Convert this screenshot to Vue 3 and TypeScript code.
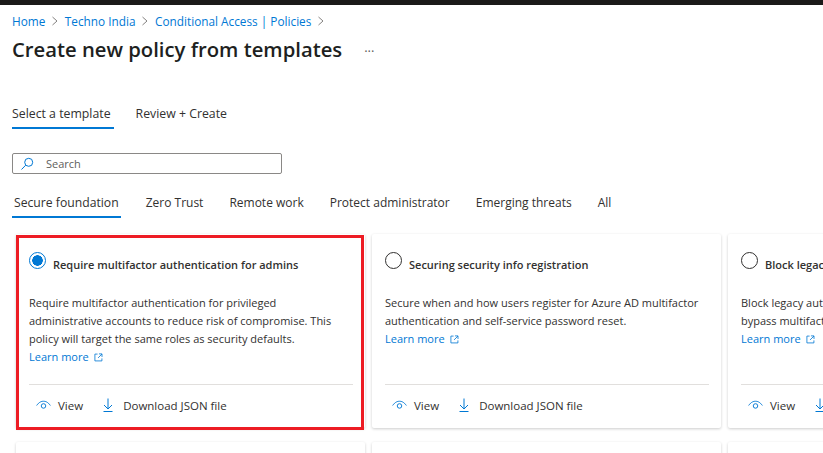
<script setup lang="ts">
interface Card { title: string; lines: string[] }
const crumbs = ['Home', 'Techno India', 'Conditional Access | Policies']
const pills = ['Secure foundation', 'Zero Trust', 'Remote work', 'Protect administrator', 'Emerging threats', 'All']
const cards: Card[] = [
  { title: 'Require multifactor authentication for admins', lines: ['Require multifactor authentication for privileged', 'administrative accounts to reduce risk of compromise. This', 'policy will target the same roles as security defaults.'] },
  { title: 'Securing security info registration', lines: ['Secure when and how users register for Azure AD multifactor', 'authentication and self-service password reset.'] },
  { title: 'Block legacy authentication', lines: ['Block legacy authentication endpoints that can be used to', 'bypass multifactor authentication.'] },
]
</script>

<template>
  <div class="page">
    <div class="topbar"></div>
    <nav class="crumbs">
      <template v-for="c in crumbs" :key="c">
        <a class="crumb">{{ c }}</a>
        <svg class="chev" viewBox="0 0 8 10" width="8" height="10"><path d="M1.500 1 L6 5 L1.500 9" fill="none" stroke="#767472" stroke-width="0.9" /></svg>
      </template>
    </nav>
    <div class="head">
      <h1>Create new policy from templates</h1>
      <span class="more">···</span>
    </div>
    <div class="steps">
      <span class="step active">Select a template</span>
      <span class="step">Review + Create</span>
    </div>
    <div class="search">
      <svg viewBox="0 0 14 14" width="14" height="14"><circle cx="8.700" cy="5.300" r="4" fill="none" stroke="#0078d4" stroke-width="1" /><path d="M5.700 8.200 L1.500 12.500" stroke="#0078d4" stroke-width="1" /></svg>
      <span>Search</span>
    </div>
    <div class="pills">
      <span v-for="(p, i) in pills" :key="p" class="pill" :class="{ on: i === 0 }">{{ p }}</span>
    </div>
    <div class="grid">
      <article v-for="(c, i) in cards" :key="c.title" class="card">
        <header class="card-head">
          <span class="radio" :class="{ checked: i === 0 }"></span>
          <h2>{{ c.title }}</h2>
        </header>
        <div class="desc">
          <div v-for="l in c.lines" :key="l">{{ l }}</div>
          <a class="learn">Learn more
            <svg viewBox="0 0 10 10" width="9" height="9"><path d="M4 1.200H1v7.600h7.800V6M5.500 1h3.400v3.400M8.800 1.200L4.500 5.500" fill="none" stroke="#0078d4" stroke-width="0.9" /></svg>
          </a>
        </div>
        <footer class="actions">
          <span class="action view">
            <svg viewBox="0 0 16 10" width="15" height="10"><path d="M0.700 5.500C3.500 1.600 6 1 8 1s4.500.6 7.300 4.500" fill="none" stroke="#0078d4" stroke-width="1" /><circle cx="8" cy="6" r="2.400" fill="none" stroke="#0078d4" stroke-width="1" /></svg>
            View
          </span>
          <span class="action dl">
            <svg viewBox="0 0 10 14" width="10" height="14"><path d="M5 0.500V11M1 7l4 4 4-4M0.500 13.500h9" fill="none" stroke="#0078d4" stroke-width="1" /></svg>
            Download JSON file
          </span>
        </footer>
      </article>
      <article class="card"></article>
      <article class="card"></article>
      <article class="card"></article>
      <div class="highlight"></div>
    </div>
  </div>
</template>

<style>
html, body { margin: 0; background: #fff; }
</style>

<style scoped>
.page {
  width: 823px;
  height: 453px;
  overflow: hidden;
  background: #fff;
  font-family: "Open Sans", "Liberation Sans", sans-serif;
  font-size: 12px;
  color: #323130;
}
.topbar { height: 5px; background: #1b1a19; }
.crumbs { display: flex; align-items: center; margin: 7px 0 0 12px; height: 17px; font-size: 11.800px; }
.crumb { color: #0078d4; }
.chev { margin: 0 6px 0 5.500px; }
.head { display: flex; align-items: center; margin: 5px 0 0 12px; height: 30px; }
h1 { margin: 0; font-size: 20.250px; font-weight: 600; color: #201f1e; }
.more { margin: 3px 0 0 22px; font-size: 13px; color: #605e5c; }
.steps { display: flex; gap: 22px; margin: 35px 0 0 12px; height: 34px; }
.step { display: flex; align-items: center; box-sizing: border-box; height: 30px; padding-bottom: 2px; font-size: 12.300px; }
.step.active { padding: 0 3px 0 0; border-bottom: 2px solid #0078d4; }
.search {
  display: flex; align-items: center; gap: 12px; box-sizing: border-box;
  width: 270px; height: 21px; margin: 20px 0 0 12px; padding-left: 7px;
  border: 1px solid #8a8886; border-radius: 2px; color: #605e5c; font-size: 11px;
}
.pills { display: flex; gap: 26px; margin: 17px 0 0 12px; height: 28px; }
.pill { height: 23px; display: flex; align-items: center; }
.pill.on {
  box-sizing: border-box; height: 27px; margin-right: -1px; padding: 3px 2px 0;
  border-bottom: 2px solid #0078d4; align-items: flex-start; font-size: 12.200px;
}
.grid {
  position: relative;
  display: grid;
  grid-template-columns: repeat(3, 349px);
  grid-auto-rows: 194px;
  gap: 14px 7px;
  margin: 15px 0 0 16px;
}
.card {
  display: flex; flex-direction: column;
  box-sizing: border-box;
  padding: 0 12px 0 13px;
  background: #fff;
  border-radius: 2px;
  box-shadow: 0 1px 3px rgba(0, 0, 0, 0.2);
}
.card-head { display: flex; gap: 7px; padding-top: 18px; height: 53px; box-sizing: border-box; align-items: flex-start; }
.card-head h2 { margin: 5px 0 0; font-size: 11px; font-weight: 600; color: #323130; white-space: nowrap; }
.radio {
  flex: none; box-sizing: border-box; width: 17px; height: 17px; border-radius: 50%;
  border: 1px solid #323130; background: #fff;
}
.radio.checked { border-color: #0078d4; background: radial-gradient(circle, #0078d4 0 5px, #fff 5.500px); }
.desc { flex: 1; font-size: 11px; line-height: 18px; white-space: nowrap; padding-top: 7px; }
.learn { display: block; color: #0078d4; }
.learn svg { margin-left: 3px; vertical-align: -1px; }
.actions { display: flex; align-items: center; flex: none; box-sizing: border-box; height: 44px; border-top: 1px solid #e1dfdd; padding: 0 0 3px 7px; font-size: 11.500px; }
.action { display: flex; align-items: center; color: #323130; }
.view { gap: 7px; margin-right: 20px; }
.dl { gap: 10px; }
.highlight {
  position: absolute; left: 0; top: 1px; width: 348px; height: 195px;
  box-sizing: border-box; border: 3px solid #ed1c24; pointer-events: none;
}
</style>
